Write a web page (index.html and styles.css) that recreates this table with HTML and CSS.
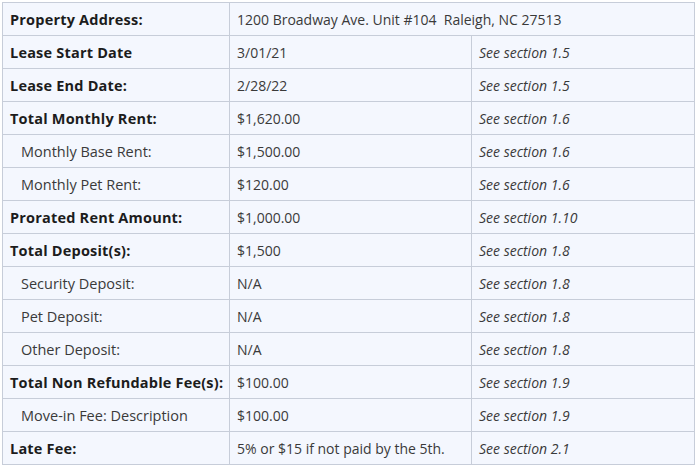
FILE: index.html
```html
<!DOCTYPE html>
<html>
<head>
<meta charset="utf-8">
<link rel="stylesheet" href="styles.css">
</head>
<body>
<div class="wrap">
<table class="lease">
<colgroup><col class="c1"><col class="c2"><col class="c3"></colgroup>
<tr><td class="label">Property Address:</td><td colspan="2">1200 Broadway Ave. Unit #104&nbsp; Raleigh, NC 27513</td></tr>
<tr><td class="label">Lease Start Date</td><td>3/01/21</td><td class="ref">See section 1.5</td></tr>
<tr><td class="label">Lease End Date:</td><td>2/28/22</td><td class="ref">See section 1.5</td></tr>
<tr><td class="label">Total Monthly Rent:</td><td>$1,620.00</td><td class="ref">See section 1.6</td></tr>
<tr><td class="sub">Monthly Base Rent:</td><td>$1,500.00</td><td class="ref">See section 1.6</td></tr>
<tr><td class="sub">Monthly Pet Rent:</td><td>$120.00</td><td class="ref">See section 1.6</td></tr>
<tr><td class="label">Prorated Rent Amount:</td><td>$1,000.00</td><td class="ref">See section 1.10</td></tr>
<tr><td class="label">Total Deposit(s):</td><td>$1,500</td><td class="ref">See section 1.8</td></tr>
<tr><td class="sub">Security Deposit:</td><td>N/A</td><td class="ref">See section 1.8</td></tr>
<tr><td class="sub">Pet Deposit:</td><td>N/A</td><td class="ref">See section 1.8</td></tr>
<tr><td class="sub">Other Deposit:</td><td>N/A</td><td class="ref">See section 1.8</td></tr>
<tr><td class="label">Total Non Refundable Fee(s):</td><td>$100.00</td><td class="ref">See section 1.9</td></tr>
<tr><td class="sub">Move-in Fee: Description</td><td>$100.00</td><td class="ref">See section 1.9</td></tr>
<tr><td class="label">Late Fee:</td><td>5% or $15 if not paid by the 5th.</td><td class="ref">See section 2.1</td></tr>
</table>
</div>
</body>
</html>
```
FILE: styles.css
```css
html, body {
  margin: 0;
  padding: 0;
  background: #ffffff;
}
.wrap {
  padding: 2px;
}
.lease {
  border-collapse: collapse;
  table-layout: fixed;
  width: 692px;
  background: #f4f7fe;
  font-family: "Open Sans", sans-serif;
  font-size: 14px;
  color: #3a3a3a;
}
.c1 { width: 227px; }
.c2 { width: 242px; }
.c3 { width: 223px; }
.lease td {
  border: 1px solid #c7cdd9;
  height: 33px;
  padding: 0 7px;
  box-sizing: border-box;
  white-space: nowrap;
  vertical-align: middle;
}
.lease td.label {
  font-weight: 700;
  font-size: 14.5px;
  letter-spacing: 0.2px;
  color: #1c1c1c;
}
.lease td.sub {
  padding-left: 18px;
  font-size: 14.5px;
}
.lease td.ref {
  font-style: italic;
}
```
